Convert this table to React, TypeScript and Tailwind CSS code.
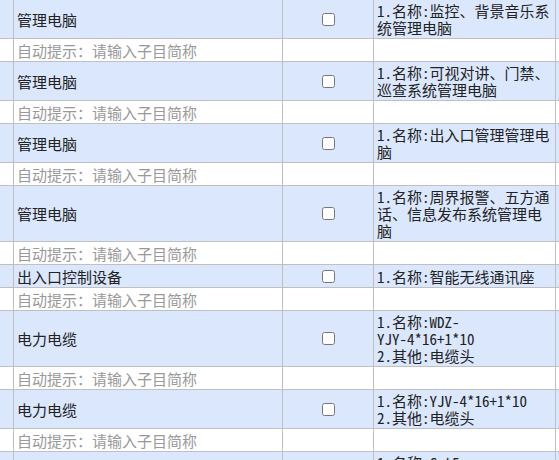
import React from "react";

type Item = {
  name: string;
  spec: string[];
  h: string;
};

const items: Item[] = [
  { name: "管理电脑", spec: ["1.名称:监控、背景音乐系统管理电脑"], h: "h-[39px]" },
  { name: "管理电脑", spec: ["1.名称:可视对讲、门禁、巡查系统管理电脑"], h: "h-[39px]" },
  { name: "管理电脑", spec: ["1.名称:出入口管理管理电脑"], h: "h-[39px]" },
  { name: "管理电脑", spec: ["1.名称:周界报警、五方通话、信息发布系统管理电脑"], h: "h-[56px]" },
  { name: "出入口控制设备", spec: ["1.名称:智能无线通讯座"], h: "h-[23px]" },
  { name: "电力电缆", spec: ["1.名称:WDZ-", "YJY-4*16+1*10", "2.其他:电缆头"], h: "h-[56px]" },
  { name: "电力电缆", spec: ["1.名称:YJV-4*16+1*10", "2.其他:电缆头"], h: "h-[39px]" },
  { name: "网线", spec: ["1.名称:Cat5e", "2.规格:超五类", "3.其他:水晶头"], h: "h-[56px]" },
];

const Row = ({ item }: { item: Item }) => (
  <div className={`flex border-b border-[#c0c0c0] bg-[#dbe7fc] ${item.h}`}>
    <div className="w-[14px] shrink-0 border-r border-[#c0c0c0]" />
    <div className="w-[269px] shrink-0 border-r border-[#c0c0c0] pl-[3px] flex items-center">
      {item.name}
    </div>
    <div className="w-[91px] shrink-0 border-r border-[#c0c0c0] flex items-center justify-center">
      <input type="checkbox" className="w-[13px] h-[13px] m-0" />
    </div>
    <div className="w-[182px] shrink-0 border-r border-[#c0c0c0] pl-[3px] pr-[2px] flex flex-col justify-center">
      {item.spec.map((s, i) => (
        <div key={i}>{s}</div>
      ))}
    </div>
    <div className="flex-1" />
  </div>
);

const HintRow = () => (
  <div className="flex h-[23px] border-b border-[#c0c0c0] bg-white">
    <div className="w-[14px] shrink-0 border-r border-[#c0c0c0]" />
    <div className="w-[269px] shrink-0 border-r border-[#c0c0c0] pl-[3px] flex items-center text-[#999]">
      自动提示：请输入子目简称
    </div>
    <div className="w-[91px] shrink-0 border-r border-[#c0c0c0]" />
    <div className="w-[182px] shrink-0 border-r border-[#c0c0c0]" />
    <div className="flex-1" />
  </div>
);

export default function App() {
  return (
    <div
      className="w-[559px] h-[460px] overflow-hidden bg-white text-[15px] leading-[17px] text-[#222]"
      style={{ fontFamily: '"Noto Sans Mono CJK SC", "Noto Sans CJK SC", monospace' }}
    >
      {items.map((item, i) => (
        <React.Fragment key={i}>
          <Row item={item} />
          {i < items.length - 1 && <HintRow />}
        </React.Fragment>
      ))}
    </div>
  );
}
